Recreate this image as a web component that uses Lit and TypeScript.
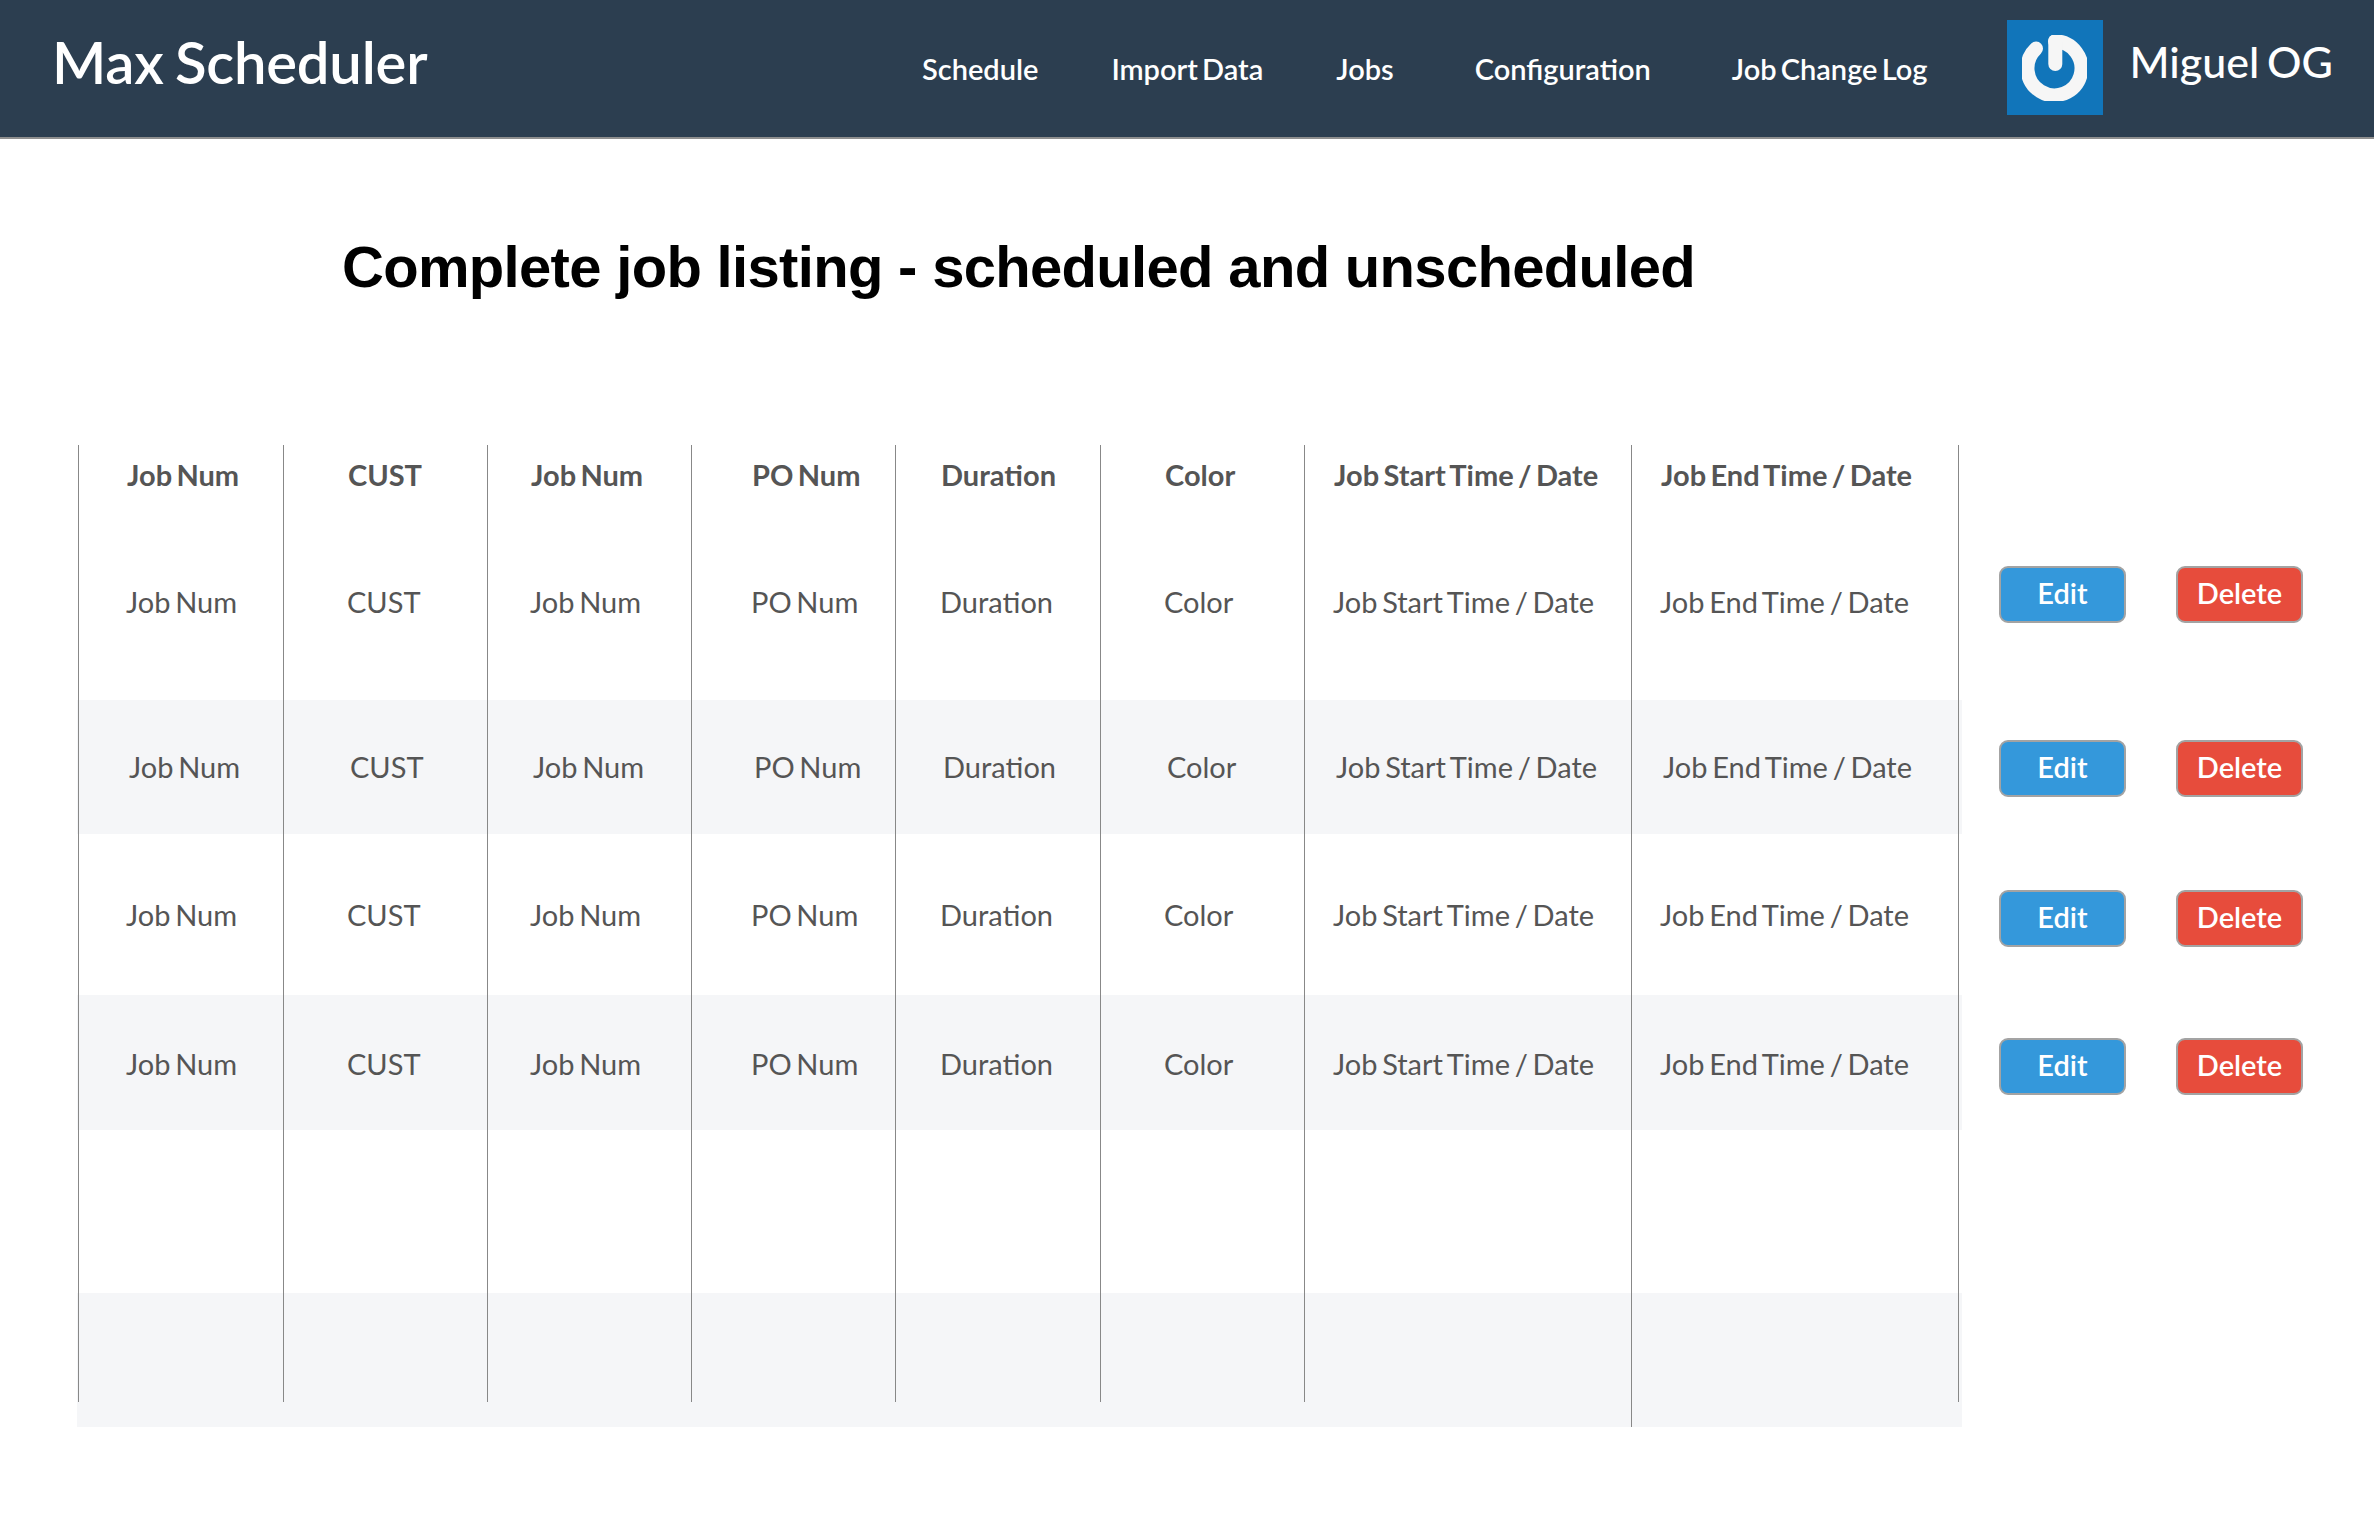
import { LitElement, css, html } from "lit";
import { customElement } from "lit/decorators.js";

const COLUMNS = [
  { label: "Job Num", pad: 47 },
  { label: "CUST", pad: 63 },
  { label: "Job Num", pad: 42 },
  { label: "PO Num", pad: 59 },
  { label: "Duration", pad: 44 },
  { label: "Color", pad: 63 },
  { label: "Job Start Time / Date", pad: 28 },
  { label: "Job End Time / Date", pad: 28 },
];

// rows of the listing, stripe every other one
const ROWS = [
  { cls: "r1", filled: true },
  { cls: "r2 stripe", filled: true },
  { cls: "r3", filled: true },
  { cls: "r4 stripe", filled: true },
  { cls: "r5", filled: false },
  { cls: "r6 stripe", filled: false },
];

@customElement("app-root")
export class AppRoot extends LitElement {
  static styles = css`
    :host {
      display: block;
      min-height: 1532px;
      background: #fff;
      font-family: Lato, "Noto Sans", sans-serif;
      color: #555;
    }

    .topbar {
      display: flex;
      align-items: center;
      height: 137px;
      border-bottom: 2px solid #8f8f8f;
      background: #2c3e50;
      color: #fff;
    }

    .brand {
      margin: -14px 0 0 52px;
      font-size: 58px;
      font-weight: 600;
      letter-spacing: -0.2px;
      word-spacing: -3px;
    }

    .nav {
      display: flex;
      gap: 73px;
      margin-left: auto;
      font-size: 29px;
      font-weight: 600;
      word-spacing: -3px;
    }

    .nav .wide {
      margin-left: 8px;
    }

    .user {
      display: flex;
      align-items: center;
      gap: 26px;
      margin-left: 80px;
      margin-right: 41px;
      font-size: 43px;
      font-weight: 500;
      word-spacing: -3px;
    }

    .user span {
      margin-top: -14px;
    }

    .logo {
      display: block;
      width: 96px;
      height: 95px;
      margin-top: -2px;
    }

    h1 {
      margin: 0;
      padding: 95px 0 0 342px;
      color: #000;
      font-family: "Liberation Sans", Arial, sans-serif;
      font-size: 58px;
      line-height: 66px;
      font-weight: 700;
      letter-spacing: -0.68px;
    }

    .table {
      margin: 145px 0 0 77px;
    }

    .row {
      display: flex;
      align-items: flex-start;
    }

    .cells {
      display: grid;
      grid-template-columns: 205px 204px 204px 204px 205px 204px 327px 327px;
      align-items: start;
      box-sizing: border-box;
      width: 1885px;
      height: var(--row-h);
      padding-left: 1px;
    }

    .stripe .cells {
      background: #f5f6f8;
    }

    .cell {
      box-sizing: border-box;
      height: var(--cell-h, var(--row-h));
      padding-top: var(--text-top);
      padding-left: calc(var(--col) + var(--shift, 0px));
      border-left: 1px solid #888;
      font-size: 29px;
      line-height: 40px;
      word-spacing: -2.7px;
      white-space: nowrap;
    }

    .cell.last {
      position: relative;
    }

    .cell.last::after {
      content: "";
      position: absolute;
      top: 0;
      bottom: 0;
      left: 326px;
      width: 1px;
      background: #888;
    }

    .head {
      --row-h: 84px;
      --text-top: 10px;
      --shift: 1px;
      font-weight: 700;
    }

    .r1 {
      --row-h: 171px;
      --text-top: 53px;
      --btn-top: 37px;
    }

    .r2 {
      --row-h: 134px;
      --text-top: 47px;
      --btn-top: 40px;
      --shift: 3px;
    }

    .r3 {
      --row-h: 161px;
      --text-top: 61px;
      --btn-top: 56px;
    }

    .r4 {
      --row-h: 135px;
      --text-top: 49px;
      --btn-top: 43px;
    }

    .r5 {
      --row-h: 163px;
      --text-top: 0px;
    }

    .r6 {
      --row-h: 134px;
      --cell-h: 109px;
      --text-top: 0px;
    }

    .r6 .cell.full {
      height: 134px;
    }

    .r6 .cell.last::after {
      bottom: 25px;
    }

    .actions {
      display: flex;
      gap: 50px;
      padding: var(--btn-top) 0 0 37px;
    }

    button {
      box-sizing: border-box;
      width: 127px;
      height: 57px;
      padding: 0 0 4px;
      border: 2px solid #a3a3a3;
      border-radius: 9px;
      color: #fff;
      font: 600 29px Lato, "Noto Sans", sans-serif;
    }

    .edit {
      background: #3498db;
    }

    .delete {
      background: #e74c3c;
    }
  `;

  renderCells(filled: boolean) {
    return html`<div class="cells">
      ${COLUMNS.map(
        (col, i) => html`<div class="cell ${i === 7 ? "last full" : ""}" style="--col:${col.pad}px">
          ${filled ? col.label : ""}
        </div>`
      )}
    </div>`;
  }

  render() {
    return html`
      <header class="topbar">
        <div class="brand">Max Scheduler</div>
        <nav class="nav">
          <span>Schedule</span>
          <span>Import Data</span>
          <span>Jobs</span>
          <span class="wide">Configuration</span>
          <span class="wide">Job Change Log</span>
        </nav>
        <div class="user">
          <svg class="logo" viewBox="0 0 96 95">
            <defs>
              <filter id="soft" x="-10%" y="-10%" width="120%" height="120%">
                <feGaussianBlur stdDeviation="0.7" />
              </filter>
            </defs>
            <rect width="96" height="95" fill="#1175ba" />
            <g fill="none" stroke="#f6f6f6" stroke-linecap="round" filter="url(#soft)">
              <path d="M29 28.6 A27 27 0 1 0 48 21.3" stroke-width="14" />
              <path d="M48.3 21.3 V44" stroke-width="14" />
            </g>
          </svg>
          <span>Miguel OG</span>
        </div>
      </header>
      <h1>Complete job listing - scheduled and unscheduled</h1>
      <div class="table">
        <div class="row head">${this.renderCells(true)}</div>
        ${ROWS.map(
          (r) => html`<div class="row ${r.cls}">
            ${this.renderCells(r.filled)}
            ${r.filled
              ? html`<div class="actions">
                  <button class="edit">Edit</button>
                  <button class="delete">Delete</button>
                </div>`
              : ""}
          </div>`
        )}
      </div>
    `;
  }
}
